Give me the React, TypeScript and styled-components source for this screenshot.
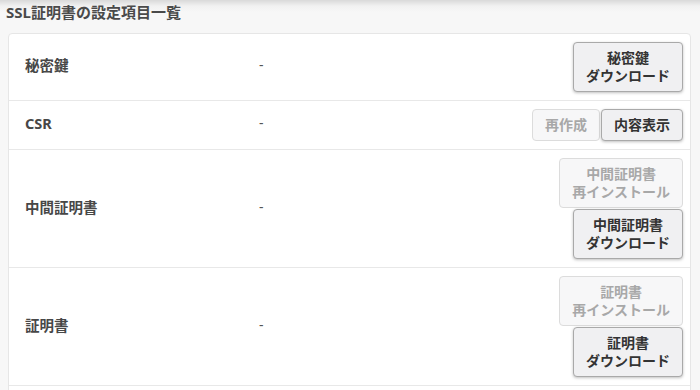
import React from 'react';
import styled, { createGlobalStyle } from 'styled-components';

const GlobalStyle = createGlobalStyle`
  html, body {
    margin: 0;
    padding: 0;
    background: #f7f7f7;
  }
  body {
    font-family: "Noto Sans", "Noto Sans CJK JP", sans-serif;
    color: #444;
    overflow: hidden;
  }
`;

const Page = styled.div`
  height: 390px;
  overflow: hidden;
  padding: 0 9px 0 8px;
  background: linear-gradient(to bottom, #d9d9d9 0px, #f1f1f1 6px, #f7f7f7 12px);
`;

const Title = styled.h2`
  margin: 0 0 0 -2px;
  padding: 2px 0 0;
  height: 31px;
  font-size: 15px;
  line-height: 20px;
  font-weight: 700;
  color: #4a4a4a;
`;

const Card = styled.div`
  background: #fff;
  border: 1px solid #e6e6e6;
  border-radius: 4px;
  padding-bottom: 40px;
`;

const Row = styled.div`
  display: grid;
  grid-template-columns: 234px 1fr auto;
  align-items: center;
  padding: 8px 7px 8px 16px;
  border-bottom: 1px solid #e8e8e8;
`;

const Label = styled.div`
  font-size: 14.5px;
  font-weight: 700;
  color: #474747;
  padding-bottom: 5px;
`;

const Value = styled.div`
  font-size: 14px;
  color: #555;
  padding-bottom: 5px;
`;

const Actions = styled.div<{ $stack?: boolean }>`
  display: flex;
  flex-direction: ${(p) => (p.$stack ? 'column' : 'row')};
  align-items: ${(p) => (p.$stack ? 'flex-end' : 'center')};
  gap: 1px;
`;

const Button = styled.button<{ $disabled?: boolean }>`
  font-family: "Noto Sans", "Noto Sans CJK JP", sans-serif;
  font-size: 14px;
  font-weight: 700;
  line-height: 18px;
  padding: 6px 12px;
  border-radius: 4px;
  cursor: pointer;
  text-align: center;
  white-space: nowrap;
  border: 1px solid ${(p) => (p.$disabled ? '#dcdcdc' : '#a9a9a9')};
  background: ${(p) => (p.$disabled ? '#f7f7f8' : '#f0f0f2')};
  color: ${(p) => (p.$disabled ? '#a8a8a8' : '#333')};
  box-shadow: ${(p) => (p.$disabled ? 'none' : '0 1px 3px rgba(0,0,0,0.25)')};
`;

const Lines: React.FC<{ lines: string[] }> = ({ lines }) => (
  <>
    {lines.map((l, i) => (
      <React.Fragment key={i}>
        {i > 0 && <br />}
        {l}
      </React.Fragment>
    ))}
  </>
);

type Btn = { lines: string[]; disabled?: boolean };
type Item = { label: string; stack?: boolean; buttons: Btn[] };

const items: Item[] = [
  { label: '秘密鍵', buttons: [{ lines: ['秘密鍵', 'ダウンロード'] }] },
  {
    label: 'CSR',
    buttons: [{ lines: ['再作成'], disabled: true }, { lines: ['内容表示'] }],
  },
  {
    label: '中間証明書',
    stack: true,
    buttons: [
      { lines: ['中間証明書', '再インストール'], disabled: true },
      { lines: ['中間証明書', 'ダウンロード'] },
    ],
  },
  {
    label: '証明書',
    stack: true,
    buttons: [
      { lines: ['証明書', '再インストール'], disabled: true },
      { lines: ['証明書', 'ダウンロード'] },
    ],
  },
];

const App: React.FC = () => {
  return (
    <Page>
      <GlobalStyle />
      <Title>SSL証明書の設定項目一覧</Title>
      <Card>
        {items.map((item) => (
          <Row key={item.label}>
            <Label>{item.label}</Label>
            <Value>-</Value>
            <Actions $stack={item.stack}>
              {item.buttons.map((b, i) => (
                <Button key={i} $disabled={b.disabled}>
                  <Lines lines={b.lines} />
                </Button>
              ))}
            </Actions>
          </Row>
        ))}
      </Card>
    </Page>
  );
};

export default App;
